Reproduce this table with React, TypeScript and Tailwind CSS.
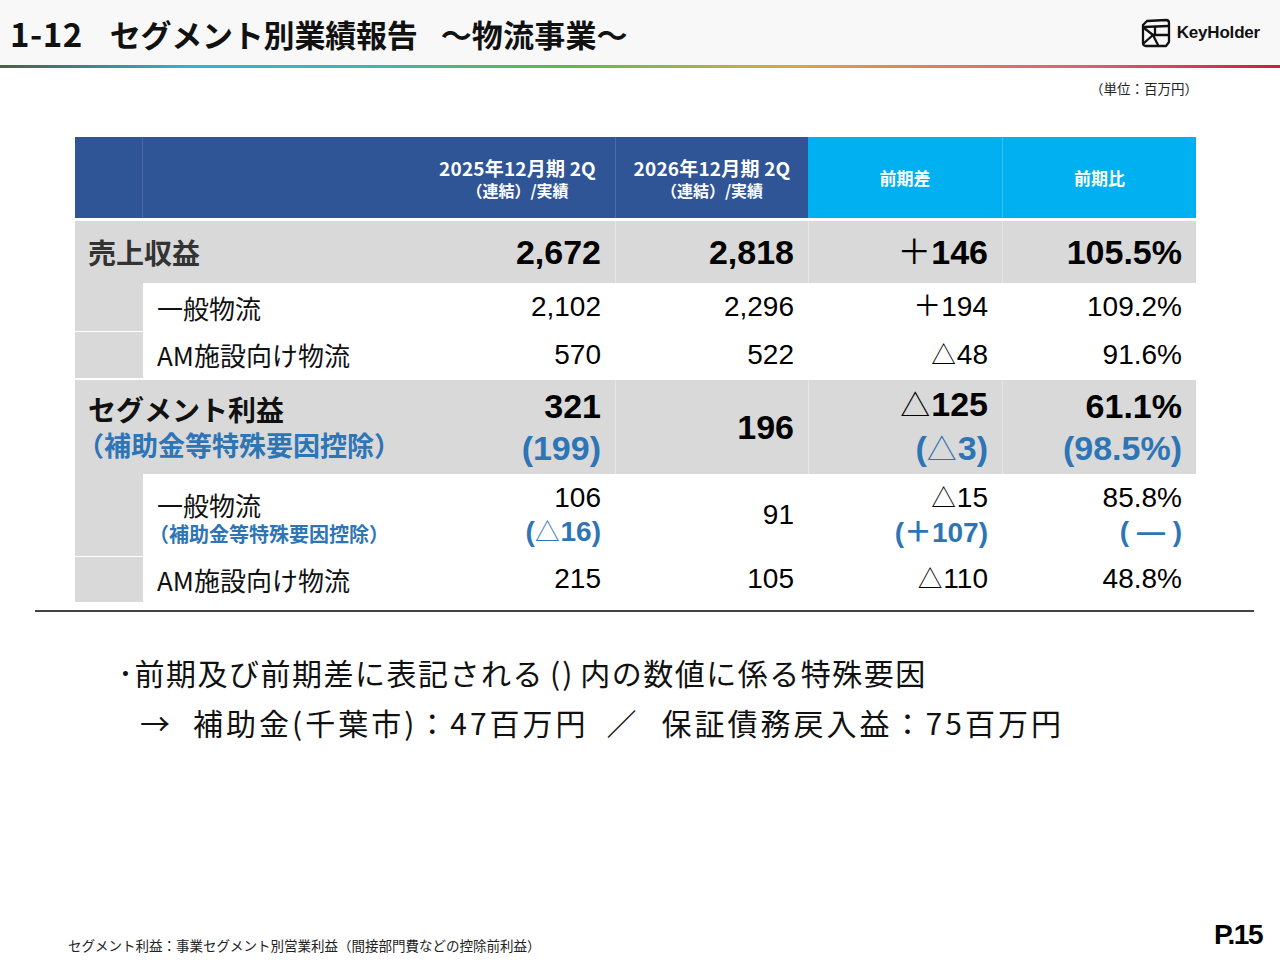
import React from 'react';

const JP = "font-['Noto_Sans_CJK_JP','Noto_Sans',sans-serif]";
const NUM = "font-['Liberation_Sans','Noto_Sans_CJK_JP',sans-serif]";

const COLS = 'grid grid-cols-[68px_277px_195px_193px_194px_194px]';

const Logo = () => (
  <div className="flex items-center gap-[6px]">
    <svg width="30" height="30" viewBox="0 0 30 30" fill="none" stroke="#111" strokeWidth="2.3" strokeLinejoin="round" strokeLinecap="round">
      <path d="M6 3 L25 2 Q28 2 28 5 V24 L25 28 H5 Q2 28 2 25 V7 Z" />
      <path d="M3 9 L27 8" />
      <path d="M3 10 L12 17 L3 25" />
      <path d="M12 17 H27" />
      <path d="M14 9 V17" />
      <path d="M12 17 L17 27" />
    </svg>
    <span className={`${NUM} text-[17px] font-bold text-[#111] tracking-[-0.2px]`}>KeyHolder</span>
  </div>
);

const HeadCell = ({ top, sub, className = '' }: { top: string; sub: string; className?: string }) => (
  <div className={`flex flex-col items-center justify-center text-white font-bold ${JP} ${className}`}>
    <div className="text-[19px] leading-[24px] tracking-[0.2px]">{top}</div>
    <div className="text-[16px] leading-[20px]">{sub}</div>
  </div>
);

const NumCell = ({ children, className = '' }: { children: React.ReactNode; className?: string }) => (
  <div className={`flex flex-col items-end justify-center pr-[14px] ${NUM} ${className}`}>{children}</div>
);

// triangle mark, drawn a little smaller than a full-width glyph
const Tri = () => <span className="text-[0.88em] font-normal mr-[1px]">△</span>;

const Blue = ({ children }: { children: React.ReactNode }) => (
  <span className="text-[34px] font-bold text-[#2e75b6] leading-[42px]">{children}</span>
);

export default function App() {
  return (
    <div className="w-[1280px] h-[960px] bg-white flex flex-col text-black overflow-hidden">
      {/* Title bar */}
      <div className="h-[65px] bg-[#f8f8f8] flex items-center justify-between pl-[10px] pr-[20px]">
        <h1 className={`${JP} flex items-baseline text-[31px] font-bold text-[#111] pt-[2px]`}>
          <span className="text-[33px] tracking-[0.5px]">1-12</span>
          <span className="ml-[27px] tracking-[-0.2px]">セグメント別業績報告</span>
          <span className="ml-[23px] tracking-[0.2px]">～物流事業～</span>
        </h1>
        <Logo />
      </div>
      <div className="h-[3px] bg-[linear-gradient(90deg,#4f5d45_0%,#33b2d6_15%,#3fb5b0_28%,#5cb84a_44%,#a9b24a_55%,#d8a844_62%,#e0825a_72%,#d9607a_85%,#d01c3c_100%)]" />

      {/* Unit */}
      <div className={`${JP} text-[13.5px] leading-[16px] text-[#222] text-right pr-[82px] pt-[12px]`}>（単位：百万円）</div>

      {/* Table */}
      <div className="mx-[75px] mt-[41px] w-[1121px]">
        {/* Header */}
        <div className={`${COLS} h-[81px]`}>
          <div className="bg-[#2f5597] border-r border-[#4a6aa8]" />
          <div className="bg-[#2f5597]" />
          <HeadCell className="bg-[#2f5597]" top="2025年12月期 2Q" sub="（連結）/実績" />
          <HeadCell className="bg-[#2f5597] border-l border-[#4a6aa8]" top="2026年12月期 2Q" sub="（連結）/実績" />
          <div className={`bg-[#00b0f0] flex items-center justify-center text-white font-bold text-[17px] ${JP}`}>前期差</div>
          <div className={`bg-[#00b0f0] border-l border-[#33c0f3] flex items-center justify-center text-white font-bold text-[17px] ${JP}`}>前期比</div>
        </div>

        {/* 売上収益 */}
        <div className={`${COLS} h-[62px] mt-[3px] bg-[#d9d9d9] text-[34px] font-bold`}>
          <div className={`col-span-2 flex items-center pl-[13px] ${JP} text-[28px] font-semibold text-[#333]`}>売上収益</div>
          <NumCell>2,672</NumCell>
          <NumCell className="border-l border-[#e6e6e6]">2,818</NumCell>
          <NumCell className="border-l border-[#e6e6e6]"><span><span className="font-normal">＋</span>146</span></NumCell>
          <NumCell className="border-l border-[#e6e6e6]">105.5%</NumCell>
        </div>

        {/* 一般物流 */}
        <div className={`${COLS} h-[48px] text-[28px]`}>
          <div className="bg-[#d9d9d9]" />
          <div className={`flex items-center pl-[14px] ${JP} text-[26px] text-[#111]`}>一般物流</div>
          <NumCell>2,102</NumCell>
          <NumCell>2,296</NumCell>
          <NumCell>＋194</NumCell>
          <NumCell>109.2%</NumCell>
        </div>

        {/* AM施設向け物流 */}
        <div className={`${COLS} h-[47px] text-[28px]`}>
          <div className="bg-[#d9d9d9] border-t border-white" />
          <div className={`flex items-center pl-[14px] ${JP} text-[26px] text-[#111]`}>AM施設向け物流</div>
          <NumCell>570</NumCell>
          <NumCell>522</NumCell>
          <NumCell><span><Tri />48</span></NumCell>
          <NumCell>91.6%</NumCell>
        </div>

        {/* セグメント利益 */}
        <div className={`${COLS} h-[94px] mt-[2px] bg-[#d9d9d9] text-[34px] font-bold`}>
          <div className={`col-span-2 flex flex-col justify-center pl-[13px] ${JP} leading-[36px]`}>
            <span className="text-[28px] font-semibold text-[#111]">セグメント利益</span>
            <span className="text-[27px] font-bold text-[#2e75b6] ml-[-11px]">（補助金等特殊要因控除）</span>
          </div>
          <NumCell>
            <span className="leading-[42px]">321</span>
            <Blue>(199)</Blue>
          </NumCell>
          <NumCell className="border-l border-[#e6e6e6]">196</NumCell>
          <NumCell className="border-l border-[#e6e6e6]">
            <span className="leading-[42px]"><Tri />125</span>
            <Blue>(<Tri />3)</Blue>
          </NumCell>
          <NumCell className="border-l border-[#e6e6e6]">
            <span className="leading-[42px]">61.1%</span>
            <Blue>(98.5%)</Blue>
          </NumCell>
        </div>

        {/* 一般物流（補助金等） */}
        <div className={`${COLS} h-[82px] text-[28px]`}>
          <div className="bg-[#d9d9d9]" />
          <div className={`flex flex-col justify-center pl-[14px] pt-[6px] ${JP}`}>
            <span className="text-[26px] leading-[32px] text-[#111]">一般物流</span>
            <span className="text-[20px] leading-[26px] font-semibold text-[#2e75b6] ml-[-8px]">（補助金等特殊要因控除）</span>
          </div>
          <NumCell>
            <span className="leading-[34px]">106</span>
            <span className="leading-[34px] font-bold text-[#2e75b6]">(<Tri />16)</span>
          </NumCell>
          <NumCell>91</NumCell>
          <NumCell>
            <span className="leading-[34px]"><Tri />15</span>
            <span className="leading-[34px] font-bold text-[#2e75b6]">(＋107)</span>
          </NumCell>
          <NumCell>
            <span className="leading-[34px]">85.8%</span>
            <span className="leading-[34px] font-bold text-[#2e75b6]">( — )</span>
          </NumCell>
        </div>

        {/* AM施設向け物流 */}
        <div className={`${COLS} h-[46px] text-[28px]`}>
          <div className="bg-[#d9d9d9] border-t border-white" />
          <div className={`flex items-center pl-[14px] ${JP} text-[26px] text-[#111]`}>AM施設向け物流</div>
          <NumCell>215</NumCell>
          <NumCell>105</NumCell>
          <NumCell><span><Tri />110</span></NumCell>
          <NumCell>48.8%</NumCell>
        </div>
      </div>

      <div className="ml-[35px] mr-[26px] mt-[8px] border-t-[2px] border-[#444]" />

      {/* Notes */}
      <div className={`${JP} text-[30px] text-[#111] mt-[40px]`}>
        <div className="pl-[118px] leading-[40px] tracking-[1.5px]">
          ･前期及び前期差に表記される<span className="mx-[6px] tracking-[2px]">()</span>内の数値に係る特殊要因
        </div>
        <div className="pl-[140px] leading-[40px] mt-[10px] flex tracking-[3px]">
          <span className="w-[53px]">→</span>
          <span>補助金(千葉市)：47百万円</span>
          <span className="ml-[18px] mr-[22px]">／</span>
          <span>保証債務戻入益：75百万円</span>
        </div>
      </div>

      {/* Footer */}
      <div className="mt-auto flex items-end justify-between pl-[68px] pr-[18px] pb-[6px]">
        <span className={`${JP} text-[13.5px] leading-[18px] text-[#222]`}>
          セグメント利益：事業セグメント別営業利益（間接部門費などの控除前利益）
        </span>
        <span className={`${NUM} text-[28px] font-black leading-[30px] tracking-[-1.5px] mb-[4px]`}>P.15</span>
      </div>
    </div>
  );
}
